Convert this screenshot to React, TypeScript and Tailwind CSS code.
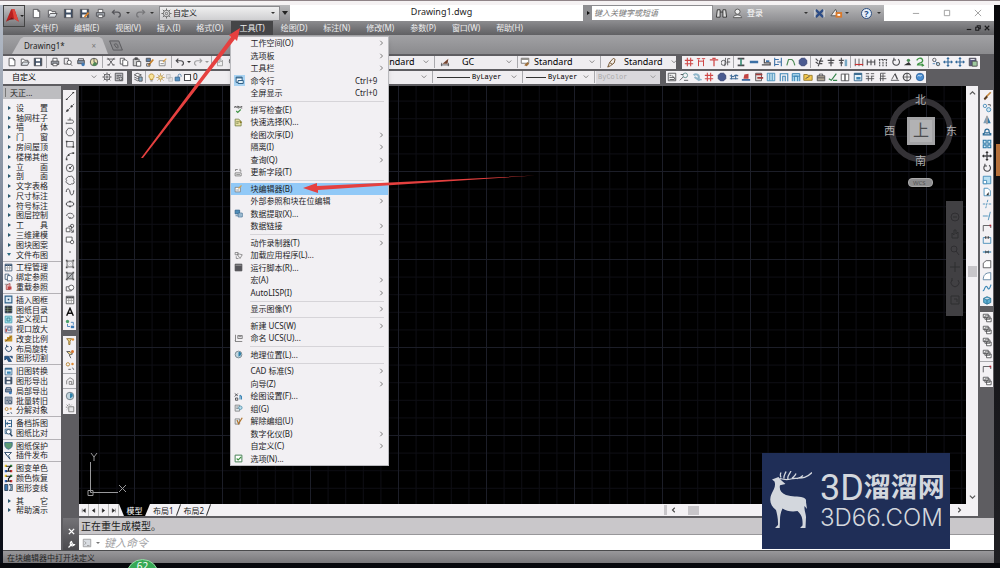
import React from "react";

const glyphs: Record<string, React.ReactNode> = {
  page: <path d="M2.5 1.5h5l2 2v7h-7zM7.5 1.5v2h2" fill="#fff" />,
  open: <><path d="M1.5 10V2.5h3l1 1.5h4v2" fill="#fff" /><path d="M1.5 10l2-4h7.5l-2 4z" fill="#dfe3e8" /></>,
  save: <><path d="M1.5 1.5h9v9h-9z" fill="#3d4d63" /><path d="M3.5 2h5v3h-5zM3.5 7h5v3h-5z" fill="#fff" stroke="none" /></>,
  saveas: <><path d="M1.5 1.5h9v9h-9z" fill="#3d4d63" /><path d="M3.5 2h5v3h-5zM3.5 7h5v3h-5z" fill="#fff" stroke="none" /><path d="M6 10l4.500-5" stroke="#d9822b" strokeWidth="2" /></>,
  print: <><path d="M3.5 5V1.500h5V5" fill="#fff" /><path d="M1.500 5h9v4h-9z" fill="#9aa0a8" /><path d="M3.500 7.500h5v3h-5z" fill="#fff" /></>,
  preview: <><path d="M1.500 1.500h5v7h-5z" /><circle cx="7.500" cy="6.500" r="2.500" fill="#fff" /><path d="M9 8.500l2 2" /></>,
  publish: <><path d="M2 4h8v4H2z" fill="#7d8ea3" /><path d="M3 4V2h6v2" /><circle cx="8.500" cy="9" r="2" fill="#3f79b5" stroke="none" /></>,
  globe: <><circle cx="6" cy="6" r="4.500" fill="#c3d6df" stroke="#66757d" /><path d="M6 3c3-1 4 1 3 4l-3 2z" fill="#2c7fa8" stroke="none" /></>,
  pie: <><circle cx="6" cy="6" r="4.500" fill="#e9e2b0" /><path d="M6 6V1.500M6 6l4 2" /><path d="M6 6l4 2a4.500 4.500 0 01-6 2z" fill="#4f8a55" stroke="none" /></>,
  cut: <path d="M2 1l7 9M10 1L3 10M1.500 9.500h3M7.500 9.500h3M1 2.500h10" />,
  copy: <><path d="M1.500 1.500h5v7h-5z" fill="#fff" /><path d="M4.500 3.500h4l2 2v5h-6z" fill="#fff" /></>,
  paste: <><path d="M1.500 2.500h7v8h-7z" fill="#cfcfcf" /><path d="M5.500 5.500h5v5.500h-5z" fill="#fff" /><path d="M3.500 1h3v2h-3z" fill="#555" /></>,
  tstyle: <><path d="M1.500 1.500h9v6h-9z" fill="#fff" stroke="#6d6a66" /><path d="M1.500 2.500h9" strokeWidth="2" stroke="#8d8a86" /><path d="M5 10l4-4 2 2-3 3z" fill="#a0703a" stroke="none" /></>,
  pastec: <><path d="M1.500 1.500h8v9h-8z" fill="#5c5a86" /><path d="M5 5h6v6H5z" fill="#9fcaa0" /><path d="M3 3h5" stroke="#fff" /></>,
  match: <><path d="M1.500 1.500h5v4h-5z" fill="#5b7ea5" /><path d="M4 10l6-7" stroke="#c98229" strokeWidth="2" /><path d="M2 8h4v3H2z" /></>,
  blk: <><path d="M1.500 4.500h7v6h-7z" fill="#fff" stroke="#777" /><path d="M6 6l4-4" stroke="#d9a24b" strokeWidth="1.500" /><path d="M3 8h4" stroke="#777" /></>,
  undo: <path d="M4 2L1.500 4.500 4 7M1.500 4.500H7c4 0 4 5 1 5.500" strokeWidth="1.400" />,
  redo: <path d="M8 2l2.500 2.500L8 7M10.500 4.500H5C1 4.500 1 9.500 4 10" strokeWidth="1.400" stroke="#a2a2a4" />,
  redoTitle: <path d="M8 2l2.500 2.500L8 7M10.500 4.500H5C1 4.500 1 9.500 4 10" strokeWidth="1.400" stroke="#77777a" />,
  pan: <path d="M3 10.500V5l2 2V2l2 0v4l2-2v6.500z" fill="#eee" stroke="#999" />,
  zoom: <><circle cx="5" cy="5" r="3.500" /><path d="M7.500 7.500l3 3" strokeWidth="1.500" /></>,
  compare: <><path d="M1.500 1.500h8v6h-8z" fill="#cfe0ee" stroke="#2d5f87" /><circle cx="6" cy="5" r="3" fill="#fff" stroke="#23415f" /><path d="M8 7.500l3 3.500" stroke="#23415f" strokeWidth="2" /></>,
  gear: <><circle cx="6" cy="6" r="3.500" /><circle cx="6" cy="6" r="1.300" /><path d="M6 .5v2M6 9.500v2M.5 6h2M9.500 6h2M2 2l1.500 1.500M8.500 8.500L10 10M10 2L8.500 3.500M2 10l1.500-1.500" /></>,
  burst: <><path d="M4.500 4.500h6v6h-6z" fill="#e6e6e8" stroke="#777" /><path d="M1 5h2M2 2l2 2M5 1v2M8 2l-1 1M2 8l1-1" stroke="#777" /></>,
  ws: <><path d="M1.500 1.500h9v9h-9z" fill="#c9c9cd" /><path d="M3 4h6M3 6h3M3 8h2" /><circle cx="8" cy="8" r="2" /></>,
  layers: <><path d="M1.500 3.500L5 1.500l5 2-4 2z" fill="#fff" /><path d="M1.500 6l4 2 4.500-2M1.500 8.500l4 2 4.500-2" /><path d="M7 6h4v5H7z" fill="#8bb2cc" /></>,
  bulb: <><path d="M6 1.200a3.300 3.300 0 00-2 6v1.500h4V7.200a3.300 3.300 0 00-2-6z" fill="#f8e39a" stroke="#b88a26" /><path d="M4.500 10.500h3" /></>,
  sun: <><circle cx="6" cy="6" r="2.500" fill="#f8e39a" stroke="#a9812f" /><path d="M6 .5v2M6 9.500v2M.5 6h2M9.500 6h2M2 2l1.500 1.500M8.500 8.500L10 10M10 2L8.500 3.500M2 10l1.500-1.500" stroke="#a9812f" /></>,
  faint: <path d="M2 2h5v5H2zM5 6h5v5H5z" stroke="#bbb" fill="#e2e2e4" />,
  lock: <><path d="M5.500 6V3.500a2 2 0 014 0V5" stroke="#3b6f9e" /><path d="M1.500 5.500h6v5h-6z" fill="#5a94c4" stroke="#2f5f8a" /></>,
  sq: <path d="M2 2h8v8H2z" fill="#fff" strokeWidth="1.400" />,
  line: <><path d="M2 10L10 2" /><path d="M1 10h2M9 2h2" stroke="#333" strokeWidth="1.500" /></>,
  xline: <><path d="M1 11L11 1" strokeDasharray="3 1" /><circle cx="3" cy="9" r="1" fill="#333" /><circle cx="8" cy="4" r="1" fill="#333" /></>,
  pline: <path d="M2 10h6c3 0 3-4 0-4H3M6 3v3M1.500 9v2" />,
  poly: <path d="M4 1.500h4L10.500 5v2.500L8 10.500H4L1.500 7.500V5z" />,
  rect: <><path d="M2 3h8v6.500H2z" /><path d="M1 2h2v2H1zM9 8.500h2v2H9z" fill="#444" stroke="none" /></>,
  arc: <><path d="M1.500 10C2 5 5 2.500 10 2.500" /><path d="M1 9h2v2H1zM9 1.500h2v2H9zM3.500 4h2v2h-2z" fill="#444" stroke="none" /></>,
  circ: <><circle cx="6" cy="6" r="4.500" /><path d="M6 6l3-3" /><circle cx="6" cy="6" r=".8" fill="#333" /></>,
  cloud: <path d="M3 3a2 2 0 013-1 2 2 0 013.500 1.500A2 2 0 0110 7a2 2 0 01-2 3.500 2.500 2.500 0 01-4.500-.5A2 2 0 012 6.500 2 2 0 013 3z" />,
  spline: <path d="M1.500 6c0-5 4-5 4.500 0s4.500 5 4.500-2" strokeWidth="1.200" />,
  ell: <><ellipse cx="6" cy="6" rx="4.500" ry="2.800" /><path d="M5 3h2M5 9h2M1 6h1M10 6h1" strokeWidth="1.800" /></>,
  ellarc: <path d="M2 6C2 1 11 2 10.500 6.500 10 9 7 9 5 8.500M4 6.500L5 8.500l2-.5" />,
  insert: <><path d="M1.500 6h4.500v4.500H1.500zM4 4h4v4" fill="#fff" /><circle cx="8.500" cy="3.500" r="2" /><path d="M7 8l3 3M10 8v3H7" /></>,
  mkblk: <><path d="M1.500 2.500h7v6h-7z" fill="#fff" /><circle cx="8.500" cy="8.500" r="2" fill="#fff" /></>,
  dot: <circle cx="6" cy="6" r=".8" fill="#222" stroke="none" />,
  hatch: <><path d="M2.500 2.500h7v7h-7z" /><path d="M1 1h2v2H1zM9 1h2v2H9zM1 9h2v2H1zM9 9h2v2H9z" fill="#555" stroke="none" /><path d="M3 6l3-3M3 9l6-6M6 9l3-3" stroke="#ccc" /></>,
  grad: <><path d="M2.500 2.500h7v7h-7z" fill="#b5b8bb" /><path d="M1 1h2v2H1zM9 1h2v2H9zM1 9h2v2H1zM9 9h2v2H9z" fill="#555" stroke="none" /><path d="M3 9l6-6" /></>,
  region: <><path d="M1.500 4.500h6v5h-6z" /><circle cx="7.500" cy="5.500" r="3" fill="#fff" /></>,
  table: <><path d="M1.500 1.500h9v9h-9z" fill="#fff" /><path d="M1.500 3h9" strokeWidth="2" /><path d="M1.500 6.500h9M4.500 3v7.500M7.500 3v7.500" stroke="#999" /></>,
  textA: <path d="M2 10.500L6 1.500l4 9M3.500 7.500h5" stroke="#111" strokeWidth="1.700" />,
  nodes: <><circle cx="3" cy="3" r="2" fill="#4aa06a" stroke="none" /><path d="M7 4h3v3M3 6v3h3" stroke="#3b79b5" /><path d="M7 8h4v3H7z" fill="#3b79b5" stroke="none" /></>,
  lampA: <><path d="M2 2h6l-2 3v4H4.500V5z" fill="#f5d98a" stroke="#8a6b2a" /><circle cx="9.500" cy="3" r="1.500" fill="#e08c35" stroke="none" /></>,
  lampB: <><path d="M2 3h4l3 3-3 1zM5 7l2 4" fill="#f5d98a" /><circle cx="9" cy="3" r="1.800" fill="#d9742c" stroke="none" /></>,
  lampC: <><circle cx="3.500" cy="4" r="2" stroke="#b27b22" /><circle cx="9" cy="3.500" r="1.500" fill="#e08c35" stroke="none" /><path d="M4 10h3M9 8l1.500 2.500" /></>,
  funnel: <path d="M1 2h9L6 6l2 5-4-5zM1 2l3 4" fill="#fff" strokeWidth="1.200" />,
  house: <path d="M2 10V5.500L6 2l4 2.500V10H5V6.500h3V10" stroke="#777" />,
  brush: <><path d="M10.500 1.500L5 7" stroke="#c98a3f" strokeWidth="2" /><path d="M5.500 5.500L2 9l1.500 2L7 7.500z" fill="#5b3d21" stroke="none" /></>,
  leader: <path d="M3 11l2-5 4-4.500 2 1-1 4-4 3zM5 6l3 2" fill="#f1ece6" stroke="#70502c" />,
  pair: <><circle cx="3.500" cy="3.500" r="2" stroke="#3b85b5" /><circle cx="8" cy="8" r="2.500" fill="#cfe6f2" stroke="#3b85b5" /><path d="M7 2h3v2" /></>,
  snap: <><path d="M1 2l4 3M5 2L1 6M2 8h3v3H2z" strokeWidth="1.200" /><path d="M8 4v6M8 4l2 2v4" stroke="#3b85b5" strokeWidth="1.400" /></>,
  mirror: <><path d="M5 2v8H1.500z" fill="#7e9db5" stroke="none" /><path d="M7 2v8h3.500z" fill="#2f79a8" stroke="none" /><path d="M6 1v10" /></>,
  offset: <path d="M1.500 9.500h9V8c-2 0-2-1-2-3a2.500 2.500 0 00-5 0c0 2 0 3-2 3zM4 7h4" stroke="#2b6a96" strokeWidth="1.400" />,
  array: <path d="M1.500 1.500h3.500v3.500H1.500zM7 1.500h3.500v3.500H7zM1.500 7h3.500v3.500H1.500zM7 7h3.500v3.500H7z" stroke="#2b79a8" strokeWidth="1.300" fill="#d6ecf7" />,
  extract: <><path d="M1.500 1.500h6v5h-6z" fill="#4f8db8" stroke="#2d5f87" /><path d="M5.500 5.500h5.500v5H5.500z" fill="#d6ecf7" stroke="#2d5f87" /><path d="M2 9h3M6 8h4" stroke="#2d5f87" /></>,
  move: <><path d="M6 1v10M1 6h10" strokeWidth="1.600" /><path d="M6 0l2 2.500H4zM6 12l2-2.500H4zM0 6l2.500-2v4zM12 6L9.500 4v4z" fill="#333" stroke="none" /></>,
  moveb: <><path d="M6 1v10M1 6h10" stroke="#33699a" strokeWidth="1.400" /><path d="M6 0l2 2.500H4zM6 12l2-2.500H4zM0 6l2.500-2v4zM12 6L9.500 4v4z" fill="#33699a" stroke="none" /></>,
  rotate: <path d="M3.500 3a4 4 0 105-.3M3.500 1v2.500H6" strokeWidth="1.300" />,
  scale: <><path d="M1.500 1.500h9v9h-9z" fill="#b8dff2" stroke="#3b85b5" /><path d="M1.500 6.500h4v4h-4z" fill="#fff" stroke="#3b85b5" /></>,
  stretch: <><path d="M2.500 1.500H7l3 3v6H2.500z" fill="#fff" stroke="#3b85b5" /><path d="M5 10l3-4v4z" fill="#333" stroke="none" /></>,
  trim: <path d="M1 6h3M8 6h3M7 1L4.500 11" stroke="#3b85b5" strokeDasharray="3 1" />,
  extend: <path d="M1 6h6M10 1L7.500 11M8 6h1" stroke="#3b85b5" />,
  brk: <><path d="M1.500 10V3h9v3" /><path d="M9 2h2v2H9z" fill="#b23" stroke="none" /></>,
  brk2: <><path d="M1.500 10V3h3M7.500 3h3v7H1.500" stroke="#3b85b5" /><path d="M4 2h1v2H4zM7 2h1v2H7z" fill="#333" /></>,
  join: <><path d="M1 6h10" stroke="#3b85b5" strokeWidth="1.500" /><path d="M4 4l2 2-2 2zM8 4L6 6l2 2z" fill="#333" stroke="none" /></>,
  chamfer: <path d="M1.500 10.500V5L5 2h5.500v8.500z" fill="#fff" />,
  fillet: <path d="M1.500 10.500C1.500 5 4 2 10.500 2v8.500z" fill="#fff" stroke="#53799a" />,
  blend: <path d="M1 9c2 1 2-5 4-5s2 4 3.500 3S10 3 11 2" stroke="#3b85b5" strokeWidth="1.400" />,
  cube: <path d="M2 4l4-2 4.500 2v5L6 11 2 9zM2 4l4 2 4.500-2M6 6v5" fill="#5fb0d2" stroke="#2a7298" />,
  stack: <path d="M1.500 1.500h6v4h-6zM3.500 3.500h6v4h-6zM5.500 6h5.500v4.500H5.500z" fill="#fff" />,
  group: <><path d="M1.500 1.500h6v8h-6z" fill="#dfe6ea" stroke="#777" /><path d="M3 4h3M3 6h3" stroke="#777" /><circle cx="8.500" cy="5" r="2.300" fill="#b9dcea" stroke="#4a8ba8" /></>,
  ungroup: <><path d="M1.500 2.500h6v7h-6z" fill="#dfe6ea" stroke="#777" /><path d="M4 4l2 5 5-8" stroke="#b0732c" strokeWidth="1.600" /></>,
  hash: <path d="M4 1v10M8 1v10M1 4h10M1 8h10" stroke="#cf4747" strokeWidth="1.300" />,
  cols: <path d="M3 3v8M9 3v8M1 2h4M7 2h4M3 5h6" stroke="#cf4747" strokeWidth="1.200" />,
  tee: <path d="M1 3.500h10M6 3.500V11M4 1.500h4" stroke="#cf4747" strokeWidth="1.500" />,
  dim: <path d="M3 4a2 2 0 100 6 2 2 0 000-6M5.500 1l-1 10M8 10V2h3M7 6h4" />,
  ibeam: <><path d="M2 2h8M2 10h8" strokeWidth="2" /><path d="M6 2v8" stroke="#3f8f7a" strokeWidth="2" /></>,
  wall: <path d="M1 6h10" stroke="#3b6fa5" strokeWidth="3" />,
  stairs: <><path d="M1 9.500h10V7h-7V2" strokeWidth="1.400" /><path d="M6 4h4v2H6z" fill="#3b6fa5" stroke="none" /></>,
  split: <path d="M2 1v10M2 3h5M2 9h5M10 1v10M5 6h5" stroke="#3b6fa5" strokeWidth="1.300" />,
  rail: <path d="M2 1v10M10 1v10M4.500 2v8M7.500 2v8M2 6h8" stroke="#4597b5" strokeWidth="1.200" />,
  roof: <path d="M1 10L3 3h4c3 2 3 4 3.500 7" stroke="#4c8a55" strokeWidth="1.400" />,
  hex: <path d="M4 1.500h4L10.500 4v4L8 10.500H4L1.500 8V4z" fill="#4a5a90" stroke="#333f70" />,
  tool1: <path d="M2 2l3 3M2 6l3 2M9 1L5 11M6 5h5M7 8h3" strokeWidth="1.400" />,
  tool2: <path d="M6 1v10M2 4h8M3 7h6" strokeWidth="1.400" />,
  tool3: <><path d="M4 1v10M1 4h6M2 7h4" strokeWidth="1.300" /><path d="M8 3h3v8H8z" fill="#78a8c4" stroke="none" /></>,
  dims: <><path d="M1.500 2v9M6 2v9M10.500 2v9" /><path d="M1 9h10" stroke="#c33" strokeWidth="1.400" /></>,
  dimh: <path d="M1.500 3v7M6 3v7M10.500 3v7M1 6h10" strokeWidth="1.300" />,
  dimd: <path d="M2 3v8M6 3v8M10 3v8M1 3h10" strokeDasharray="2 1" strokeWidth="1.300" />,
  person: <><path d="M1 10h9L7 6z" fill="#333" stroke="none" /><circle cx="6.500" cy="4" r="2" fill="#4c8a55" stroke="none" /></>,
  swirl: <path d="M2 4c3-5 8-2 7 1S3 7 3 9.500h5M8 8l2 2-2 1" stroke="#3f9344" strokeWidth="1.600" />,
  linkk: <><circle cx="4" cy="3.500" r="2" /><path d="M5 5l3 3M2 8h3" stroke="#3b79b5" /><circle cx="8.500" cy="8.500" r="2" fill="#b7d6e8" /></>,
  app: <path d="M1.500 2h4v3h-4zM4 4l4 6 3-5-4-1zM3 7v3h3" stroke="#777" />,
  list: <><path d="M1.500 1.500h9v9h-9z" fill="#f1f1f1" /><path d="M3 4h2M3 6.500h6M3 9h6M6 4l4 5" /></>,
  search2: <><circle cx="7.500" cy="4" r="2.800" stroke="#588" /><path d="M1 10l4-4M2 3h3M6 10h5" /></>,
  fog: <path d="M2 4c3-3 7 0 6 3s3 2 3 3M3 6l6 4" stroke="#8fb5c9" strokeWidth="2.500" />,
  wave: <path d="M1 5c2-2 3 2 5 0s3-2 5 0M1 8h10M3 3v6M8 4v5" stroke="#426d99" strokeWidth="1.300" />,
  redhat: <><path d="M1 9.500h10" stroke="#34609a" strokeWidth="2" /><path d="M3 8l1-5 5-1v6z" fill="#c24343" stroke="none" /></>,
  redpg: <><path d="M2 1.500h7v9H2z" fill="#e6dede" /><path d="M2 3h8M4 7h7" stroke="#a33a3a" strokeWidth="2" /></>,
  reload: <><path d="M3 10V4l5-2v8z" fill="#e3b5b5" stroke="#a34a4a" /><path d="M5 6h5v4H5z" fill="#c24343" stroke="none" /><path d="M1 3h4" stroke="#777" /></>,
  bluepg: <path d="M1.500 1.500h9v9h-9zM4.500 2v8M7.500 2v8" fill="#c4e2ef" stroke="#3b85b5" />,
  gate: <path d="M1.500 11V2h9v9M4.500 11V5h3v6" stroke="#3b85b5" strokeWidth="1.300" />,
  gateb: <path d="M1.500 11V2h9v9M4 11V5h4v6M1.500 5h9" fill="#b8dff2" stroke="#3b85b5" strokeWidth="1.200" />,
  folder: <><path d="M1 3h4l1 1h5v6H1z" fill="#f3c74f" stroke="#8f7427" /><path d="M3 8l5-3" /></>,
  briefcase: <><path d="M1.500 4.500h9v6h-9z" fill="#b5aa98" /><path d="M4 4.500V2.500h4v2M1.500 7h9" /></>,
  field: <><path d="M1.500 6.500h8v4h-8z" fill="#fff" stroke="#666" /><path d="M3 8.500h5M2 4V2h3M8 1v3h2" stroke="#666" /></>,
  check: <path d="M1 8l3 2 6-8M6 10h5" stroke="#34834a" strokeWidth="1.400" />,
  book: <path d="M1.500 2.500H6v8H1.500zM6 2.500h4.500v8H6z" fill="#fff" />,
  win: <><path d="M1.500 1.500h9v9h-9z" fill="#e4f1f8" stroke="#2d5f87" /><path d="M1.500 2.500h9" stroke="#2d5f87" strokeWidth="2" /><path d="M4 6h5v3H4z" fill="#3b85b5" stroke="none" /></>,
  cmd: <><path d="M1.500 1.500h8v7h-8z" fill="#fff" stroke="#2d5f87" strokeWidth="1.300" /><path d="M1.500 2.500h8" stroke="#2d5f87" strokeWidth="1.500" /><path d="M4 6h7v4H4z" fill="#e4f1f8" stroke="#2d5f87" strokeWidth="1.300" /></>,
  key: <path d="M1 2h4M1 5h4M7 2h4M7 5h4M1 8h10M4 5v6M8 5v6" />,
  flag: <path d="M3 11V1.500h6M3 5h6M6 2v9M2 8h8" />,
  level: <><path d="M1 10h10M6 2L2 9" /><path d="M6 2l3 7" strokeWidth="1.600" /></>,
  dstyle: <><path d="M1 9.500h10M2 7v4M10 7v4" /><path d="M3 8l7-6-1 6z" fill="#70402c" stroke="none" /></>,
  target: <><circle cx="6" cy="6" r="4.500" strokeWidth="1.300" /><path d="M6 1v10M1 6h10" /></>,
  ball: <><circle cx="6" cy="6" r="4.500" fill="#4b8ed0" stroke="#2e619c" /><path d="M3 5c2-2 3 1 5-1" stroke="#fff" /></>,
  dgrid: <><path d="M1.500 1.500h9v9h-9z" fill="#333" /><path d="M1.500 4.500h9M1.500 7.500h9M5 1.500v9" stroke="#9b9" strokeWidth=".6" /></>,
  frame: <><path d="M1.500 1.500h9v9h-9z" fill="#d7e7f2" stroke="#2d5f87" strokeWidth="1.500" /><path d="M5 5h2v2H5z" fill="#1d3f67" stroke="none" /></>,
  aqua: <><path d="M1.500 1.500h9v9h-9z" fill="#9fdbe6" stroke="#3f9db0" /><path d="M4 4h4v4H4z" stroke="#297989" /></>,
  vzoom: <><path d="M1.500 1.500h9v9h-9z" fill="#e9dfe4" stroke="#5a6f93" /><path d="M5 3h4v4H5z" stroke="#2d5f87" /><path d="M2 5h2v4H2z" fill="#b34a4a" stroke="none" /></>,
  ratio: <><path d="M1 10V7h3V4h3V2h4v8z" fill="#c7962a" stroke="none" /><path d="M2 10l8-7" stroke="#65451c" /></>,
  knife: <path d="M1 3h5l4 7H6L4 6 1 8zM7 3h4v3" fill="#25598e" stroke="#1c3f67" />,
  split2: <path d="M2 1v10M10 1v10M3 6h6M5 4L3 6l2 2M6 2h3M6 10h3" stroke="#2d5f87" strokeWidth="1.300" />,
  wrench: <path d="M2 10l5-5M6 2a3 3 0 104 4L8.500 6 7 5z" strokeWidth="1.600" />,
  scr: <><path d="M1.500 1.500h9v9h-9z" fill="#55555a" /><path d="M2 3h8" stroke="#aaa" /></>,
  quick: <><path d="M1.500 1.500h5l3 3v6h-8z" fill="#e9e1a8" stroke="#6b7a3c" /><path d="M3 5h4M3 7h3" stroke="#6b7a3c" /><path d="M7 3l4 3-3 1z" fill="#8a7a26" stroke="none" /></>,
  colors: <><path d="M1 1h3v3H1z" fill="#e7c12c" stroke="none" /><path d="M8 1h3v3H8z" fill="#3a9a4c" stroke="none" /><path d="M1 8h3v3H1z" fill="#3167b8" stroke="none" /><path d="M8 8h3v3H8z" fill="#c33" stroke="none" /><path d="M3 3h6L6 6v3M3 9.500h6" strokeWidth="1.500" stroke="#222" /></>,
  lines: <><path d="M1 2h4v8H1z" fill="#3b79b5" stroke="#234" /><path d="M7 2c3 2 3 6 0 8h4V2z" fill="#9cc4dd" stroke="#234" /></>,
  abc: <><path d="M1 4V2h2v2M5 1v3h2V2H5M11 2H9v2h2" stroke="#444" /><path d="M3 8l2 2 4-4" stroke="#3f9344" strokeWidth="1.500" /></>,
  ucs: <path d="M2 1v9h9M2 10l-1-1M5 2h6v4H5zM6 3.500h4" stroke="#666" />,
  opt: <><path d="M1.500 1.500h9v9h-9z" fill="#fff" stroke="#447f52" strokeWidth="1.300" /><path d="M3.500 6l2 2 4-4" stroke="#3f9344" strokeWidth="1.500" /></>,
  shield: <path d="M1 2h10v3c0 4-3 5-5 6C3 10 1 8 1 5z" fill="#5e9b74" stroke="#2d5f87" />,
};

function Ico({ n, s = "size-[10px]", c = "#4a4a4e" }: { n: string; s?: string; c?: string }) {
  return (
    <svg viewBox="0 0 12 12" className={`${s} shrink-0`} fill="none" stroke={c} strokeWidth="1" aria-hidden="true">
      {glyphs[n]}
    </svg>
  );
}

function Tool({ n, w = "w-[12px]", c }: { n: string; w?: string; c?: string }) {
  return (
    <button type="button" aria-label={n} className={`${w} flex h-3 shrink-0 items-center justify-center`}>
      <Ico n={n} c={c} />
    </button>
  );
}

const Bar = () => <span className="mx-px h-3 w-px shrink-0 bg-[#a9a9ad]" />;
const HBar = () => <span className="my-px h-px w-full shrink-0 bg-[#a9a9ad]" />;
const Caret = ({ c = "border-t-[#333]" }: { c?: string }) => (
  <span className={`block h-0 w-0 shrink-0 border-x-2 border-t-2 border-x-transparent ${c}`} />
);

function Drop({ label, value, className, font = "", children }: { label: string; value: string; className: string; font?: string; children?: React.ReactNode }) {
  return (
    <label className={`relative flex h-[13px] shrink-0 items-center ${className}`}>
      {children}
      <select aria-label={label} className={`min-w-0 flex-1 appearance-none bg-transparent leading-3 outline-none ${font}`}>
        <option>{value}</option>
      </select>
      <svg viewBox="0 0 8 8" className="mr-1 size-[6px] shrink-0" fill="none" stroke="#666" aria-hidden="true">
        <path d="M1 2l3 3 3-3" />
      </svg>
    </label>
  );
}

const menus = ["文件(F)", "编辑(E)", "视图(V)", "插入(I)", "格式(O)", "工具(T)", "绘图(D)", "标注(N)", "修改(M)", "参数(P)", "窗口(W)", "帮助(H)"];

type Item = { t: string; icon?: string; sub?: boolean; key?: string; on?: boolean };
const toolMenu: Item[][] = [
  [{ t: "工作空间(O)", sub: true }, { t: "选项板", sub: true }, { t: "工具栏", sub: true }, { t: "命令行", icon: "cmd", key: "Ctrl+9" }, { t: "全屏显示", key: "Ctrl+0" }],
  [{ t: "拼写检查(E)", icon: "abc" }, { t: "快速选择(K)...", icon: "quick" }, { t: "绘图次序(D)", sub: true }, { t: "隔离(I)", sub: true }, { t: "查询(Q)", sub: true }, { t: "更新字段(T)", icon: "field" }],
  [{ t: "块编辑器(B)", icon: "blk", on: true }, { t: "外部参照和块在位编辑", sub: true }, { t: "数据提取(X)...", icon: "extract" }, { t: "数据链接", sub: true }],
  [{ t: "动作录制器(T)", sub: true }, { t: "加载应用程序(L)...", icon: "app" }, { t: "运行脚本(R)...", icon: "scr" }, { t: "宏(A)", sub: true }, { t: "AutoLISP(I)", sub: true }],
  [{ t: "显示图像(Y)", sub: true }],
  [{ t: "新建 UCS(W)", sub: true }, { t: "命名 UCS(U)...", icon: "ucs" }],
  [{ t: "地理位置(L)...", icon: "globe" }],
  [{ t: "CAD 标准(S)", sub: true }, { t: "向导(Z)", sub: true }, { t: "绘图设置(F)...", icon: "snap" }, { t: "组(G)", icon: "group" }, { t: "解除编组(U)", icon: "ungroup" }, { t: "数字化仪(B)", sub: true }, { t: "自定义(C)", sub: true }, { t: "选项(N)...", icon: "opt" }],
];

function ToolMenu() {
  return (
    <ul role="menu" className="absolute -left-px top-[15px] z-30 flex h-[430px] w-[159px] flex-col border border-[#b9b9bd] bg-[#f2f0f3] text-[#1d1d1f] shadow-md">
      {toolMenu.map((g, gi) => (
        <React.Fragment key={gi}>
          {gi > 0 && <li role="separator" className="flex h-1 shrink-0 items-center pl-[19px] pr-1"><span className="h-px w-full bg-[#d6d4d8]" /></li>}
          {g.map((m) => (
            <li key={m.t} role="none" className="min-h-0 flex-1">
              <button type="button" role="menuitem" className={`flex h-full w-full items-center pr-1 text-left leading-3 ${m.on ? "bg-[#91c9f7]" : ""}`}>
                <span className="flex w-[19px] items-center pl-[3px]">
                  {m.icon && <span className={m.icon === "cmd" ? "bg-[#a9d3f2] p-px" : ""}><Ico n={m.icon} s="size-[9px]" /></span>}
                </span>
                <span className="flex-1 whitespace-nowrap">{m.t}</span>
                {m.key && <span className="pr-[7px]">{m.key}</span>}
                {m.sub && (
                  <svg viewBox="0 0 8 8" className="size-[6px]" fill="none" stroke="#555" aria-hidden="true"><path d="M3 1l3 3-3 3" /></svg>
                )}
              </button>
            </li>
          ))}
        </React.Fragment>
      ))}
    </ul>
  );
}

const palette: [string, string][][] = [
  ["设置", "轴网柱子", "墙体", "门窗", "房间屋顶", "楼梯其他", "立面", "剖面", "文字表格", "尺寸标注", "符号标注", "图层控制", "工具", "三维建模", "图块图案"].map((t) => ["", t] as [string, string]).concat([["v", "文件布图"]]),
  [["table", "工程管理"], ["copy", "绑定参照"], ["reload", "重载参照"]],
  [["frame", "插入图框"], ["dgrid", "图纸目录"], ["aqua", "定义视口"], ["vzoom", "视口放大"], ["ratio", "改变比例"], ["rotate", "布局旋转"], ["knife", "图形切割"]],
  [["win", "旧图转换"], ["save", "图形导出"], ["publish", "局部导出"], ["ws", "批量转旧"], ["lampC", "分解对象"]],
  [["split2", "备档拆图"], ["compare", "图纸比对"]],
  [["shield", "图纸保护"], ["funnel", "插件发布"]],
  [["colors", "图变单色"], ["colors", "颜色恢复"], ["lines", "图形变线"]],
  [["", "其它"], ["", "帮助演示"]],
];

function Palette() {
  return (
    <aside className="flex w-[58px] shrink-0 flex-col bg-[#f3f1f4]">
      <h2 className="flex h-[13px] items-center gap-1 bg-[#bdbdc0] pl-[2px] leading-3 text-[#222]">
        <span className="h-[9px] w-px bg-[#777]" />天正...
      </h2>
      <ul className="mb-[35px] mt-1 flex min-h-0 flex-1 flex-col text-[#1d1d1f]">
        {palette.map((g, gi) => (
          <React.Fragment key={gi}>
            {gi > 0 && <li role="separator" className="flex h-[3px] shrink-0 items-center"><span className={`h-px w-full ${gi === 7 ? "" : "bg-[#b4b2b6]"}`} /></li>}
            {g.map(([ic, t]) => (
              <li key={t} className="min-h-0 flex-1">
                <button type="button" className="flex h-full w-full items-center leading-[10px]">
                  <span className="flex w-[13px] shrink-0 items-center pl-px">
                    {ic === "" && <span className="ml-1 border-y-2 border-l-[3px] border-y-transparent border-l-[#2d5a70]" />}
                    {ic === "v" && <span className="ml-[3px] border-x-2 border-t-[3px] border-x-transparent border-t-[#2d6a80]" />}
                    {ic.length > 1 && <Ico n={ic} s="size-[9px]" c="#2d4a6a" />}
                  </span>
                  <span className="flex w-8 justify-between whitespace-nowrap">
                    {t.length === 2 ? <><span>{t[0]}</span><span>{t[1]}</span></> : t}
                  </span>
                </button>
              </li>
            ))}
          </React.Fragment>
        ))}
      </ul>
    </aside>
  );
}

function Strip({ items, className = "" }: { items: string[]; className?: string }) {
  return (
    <div role="toolbar" className={`flex flex-col items-center bg-[#f3f1f4] ${className}`}>
      {items.map((n, i) => (n === "|" ? <HBar key={i} /> : <Tool key={i} n={n} />))}
    </div>
  );
}

function Row({ items, c }: { items: string[]; c?: string }) {
  return <>{items.map((n, i) => (n === "|" ? <Bar key={i} /> : <Tool key={i} n={n} c={c} />))}</>;
}

function Compass() {
  return (
    <div className="absolute right-[10px] top-[7px] h-[74px] w-[72px] text-[11px] leading-3 text-[#b0b0b2]">
      <svg viewBox="0 0 72 74" className="absolute inset-0 size-full" aria-hidden="true">
        <circle cx="37" cy="37" r="29" fill="none" stroke="#343236" strokeWidth="6" />
        <path d="M23 24h28v28H23z" fill="#a3a3a5" />
        <path d="M26 27h22v22H26z" fill="#b2b2b4" />
      </svg>
      <span className="absolute left-[31px] top-[1px]">北</span>
      <span className="absolute left-[31px] top-[62px]">南</span>
      <span className="absolute left-0 top-[32px]">西</span>
      <span className="absolute left-[62px] top-[32px]">东</span>
      <span className="absolute left-[29px] top-[29px] text-[16px] leading-4 text-[#4c4c4e]">上</span>
    </div>
  );
}

function Canvas() {
  return (
    <div className="relative min-h-0 flex-1 overflow-hidden bg-black">
      <svg className="absolute inset-0 size-full" aria-hidden="true">
        <defs>
          <pattern id="grid" width="88" height="88" x="55" y="85" patternUnits="userSpaceOnUse">
            <path d="M18.100 0v88M35.700 0v88M53.300 0v88M70.900 0v88M0 18.100h88M0 35.700h88M0 53.300h88M0 70.900h88" stroke="#0d0d13" />
            <path d="M.5 0v88M0 .5h88" stroke="#1c1e28" />
          </pattern>
        </defs>
        <rect width="100%" height="100%" fill="url(#grid)" />
      </svg>
      <svg viewBox="0 0 46 46" className="absolute bottom-[6px] left-[6px] size-[46px]" fill="none" stroke="#99999b" aria-hidden="true">
        <path d="M5.500 38V10M8 40.500h25M3 38.500h5v5H3zM5.500 38.500v2h2M6 1l3 4 3-4M9 5v4M34 33l7 7M41 33l-7 7" />
      </svg>
      <Compass />
      <button type="button" className="absolute right-[33px] top-[92px] flex h-[9px] w-[25px] items-center rounded-sm border border-[#aaa] bg-[#8e8e90] pl-1 text-[6px] leading-[6px] text-[#555]">WCS</button>
      <div className="absolute right-[3px] top-[115px] flex h-[115px] w-[17px] flex-col items-center justify-around bg-[#414043] py-2">
        {["target", "hex", "zoom", "move", "rotate", "rect"].map((n, i) => (
          <svg key={n} viewBox="0 0 12 12" className="size-[12px]" fill="none" stroke="#2f2e31" aria-hidden="true">
            <path d={["M6 2a4 4 0 100 8 4 4 0 000-8M4 6h4", "M3 10V5l2 2V2h2v4l2-2v6z", "M5 2a3 3 0 100 6 3 3 0 000-6M7 7l3 4", "M6 1v10M1 6h10", "M3 3a4 4 0 106 0M3 1v3", "M2 2h8v8H2zM5 5h3v3"][i]} />
          </svg>
        ))}
      </div>
    </div>
  );
}

function Deer() {
  return (
    <svg viewBox="0 0 44 58" className="h-[58px] w-[44px] shrink-0" aria-hidden="true">
      <path d="M4 8.500L10.500 6l3 3.500L17.500 13l-5.500 1.200c-1 4.300 1 7.800 6 9.800 6 2 12 1 17 2.500 2 .7 3.500 1.500 3 4.500l1 7-2.500-3c-.5 4 1.500 8 1.500 11l-.5 11h-5.500l2.500-2.500c.5-7-1-11-5-14.500-5 1-11 .3-15-2.500-2 4-2.500 8-2.500 11l-.3 8.500H7l3-3c.3-6-1-11-2-15C2.500 35 .8 29 3.500 23 6 18 8 15 6.500 10.500z" fill="#d3d7dd" />
      <path d="M12 7.500c5 1.500 10 1 13 0 6-1.500 11 2 19-6M13 6.500c-1-2-1-3 0-5M16 7.500c-.5-3 1-4 2-7M20 8c-1-3 1-4 3-8M24 7.500c1-2 3-2 4-5M29 7.500c3 0 4-1 6-3" fill="none" stroke="#d3d7dd" strokeWidth="1.300" />
    </svg>
  );
}

export default function App() {
  return (
    <div
      lang="zh-CN"
      className="relative flex h-screen min-h-[560px] flex-col overflow-hidden bg-linear-to-b from-[#b9c0cb] from-0% via-[#7b8698] via-40% to-[#0b0f18] to-70% pl-[3px] font-['Noto_Sans','Noto_Sans_CJK_SC',sans-serif] text-[8px]"
    >
      <div className="-ml-[3px] h-[5px] shrink-0 border-t border-[#8f8488] bg-[#f5f2f3]" />
      <div className="flex min-h-0 flex-1 bg-[#0b0b0e]">
        <div className="flex min-w-0 flex-1 flex-col bg-[#5e5d61]">
          <header className="relative z-20 flex bg-linear-to-b from-[#c4c4c6] to-[#5f5f62]">
            <button type="button" aria-label="Application" className="flex h-[22px] w-[22px] shrink-0 items-center justify-center border border-[#444] bg-linear-to-b from-[#c6c6c8] to-[#77777a]">
              <svg viewBox="0 0 20 18" className="h-[18px] w-[19px]" aria-hidden="true">
                <path d="M1 15L6.500 2H10l4.500 13-4-2.500L7 11z" fill="#b8201f" />
                <path d="M7.500 2H10l4.500 13-5-3.500z" fill="#e0463c" />
                <path d="M1 15l6-4.500 3 2L5 13z" fill="#7c1114" />
                <path d="M16 8h4l-2 2z" fill="#222" />
              </svg>
            </button>
            <div className="flex min-w-0 flex-1 flex-col">
              <div className="flex h-4 bg-white">
                <div className="flex w-[265px] shrink-0 items-center bg-linear-to-b from-[#b9b9bb] to-[#8f8f92] pl-[3px]">
                  {["page", "open", "save", "saveas", "print", "undo"].map((n) => (
                    <button key={n} type="button" aria-label={n} className="flex w-4 items-center justify-center"><Ico n={n} s="size-[11px]" c="#55555a" /></button>
                  ))}
                  <span className="flex w-2 justify-center"><Caret /></span>
                  <button type="button" aria-label="redo" className="flex w-4 items-center justify-center"><Ico n="redoTitle" s="size-[11px]" /></button>
                  <span className="flex w-2 justify-center"><Caret /></span>
                  <label className="ml-[3px] flex h-[15px] flex-1 items-center gap-px border border-[#8a8a8d] bg-linear-to-b from-[#efeff0] to-[#cfcfd1] pl-px text-[#222]">
                    <Ico n="gear" s="size-[11px]" c="#666" />
                    <select aria-label="Workspace" className="min-w-0 flex-1 appearance-none bg-transparent leading-3 outline-none"><option>自定义</option></select>
                    <span className="mr-1"><Caret /></span>
                  </label>
                  <button type="button" aria-label="More" className="flex w-[10px] items-center justify-center"><span className="block h-0 w-0 border-x-[3px] border-t-4 border-x-transparent border-t-[#222]" /></button>
                </div>
                <h1 className="flex-1 pl-[10px] text-center text-[9px] leading-[13px] text-[#222]">Drawing1.dwg</h1>
                <div className="flex w-[130px] shrink-0 border border-[#8d8d90]">
                  <button type="button" aria-label="Expand" className="flex w-2 items-center justify-center bg-[#8f8f92]"><span className="border-y-2 border-l-[3px] border-y-transparent border-l-[#111]" /></button>
                  <input aria-label="Search" placeholder="键入关键字或短语" className="min-w-0 flex-1 bg-white pl-[2px] italic outline-none placeholder:text-[#777]" />
                </div>
                <div className="flex w-[171px] shrink-0 items-center bg-linear-to-b from-[#b9b9bb] to-[#8f8f92] pl-[2px] text-white">
                  <svg viewBox="0 0 14 12" className="h-3 w-[13px]" fill="#ddd" stroke="#333" aria-hidden="true"><path d="M1.500 10.500l1-8h3v8zM8.500 10.500v-8h3l1 8zM5.500 5h3" /></svg>
                  <svg viewBox="0 0 12 12" className="ml-1 size-[11px]" fill="#eee" stroke="#555" aria-hidden="true"><circle cx="6" cy="4" r="2.800" /><path d="M1.500 10.500c0-4 9-4 9 0z" /></svg>
                  <button type="button" className="ml-1 leading-3">登录</button>
                  <span className="ml-auto"><Caret /></span>
                  <svg viewBox="0 0 12 12" className="ml-[6px] size-[11px]" fill="none" aria-hidden="true"><path d="M2 2l8 8M10 2l-8 8" stroke="#2d4c86" strokeWidth="2.500" /><path d="M1 2v8M11 2v8" stroke="#e8edf5" /></svg>
                  <svg viewBox="0 0 14 12" className="ml-[5px] h-3 w-[13px]" aria-hidden="true"><path d="M1 9l5-7 3 7z" fill="#eee" stroke="#555" /><path d="M6 5h7v6H6z" fill="#d9792b" /><path d="M8 7h3v2H8z" fill="#fff" /></svg>
                  <span className="ml-[2px]"><Caret /></span>
                  <span className="ml-[12px] flex size-[11px] items-center justify-center rounded-full border border-[#2f4f7f] bg-[#e6effa] text-[9px] font-bold leading-[9px] text-[#234a86]">?</span>
                  <span className="ml-[5px] mr-[3px]"><Caret /></span>
                </div>
                <div className="flex w-[110px] shrink-0 items-center justify-around pl-4">
                  {["M1 5h7", "M1.500 1.500h6v6h-6z", "M1 1l7 7M8 1L1 8"].map((d, i) => (
                    <button key={i} type="button" aria-label={["Minimize", "Maximize", "Close"][i]}>
                      <svg viewBox="0 0 9 9" className="block size-[8px]" fill="none" stroke="#999" aria-hidden="true"><path d={d} /></svg>
                    </button>
                  ))}
                </div>
              </div>
              <nav className="flex h-[14px] items-center bg-linear-to-b from-[#8c8c8f] to-[#606063]">
                {menus.map((m) => (
                  <div key={m} className={`relative h-full ${m === "工具(T)" ? "bg-[#454547]" : ""}`}>
                    <button type="button" className="h-full whitespace-nowrap px-2 leading-[14px] text-[#ededee]">{m}</button>
                    {m === "工具(T)" && <ToolMenu />}
                  </div>
                ))}
                <div className="ml-auto mr-1 flex gap-[3px]">
                  {["M1 6h6", "M1 3h4v4H1zM3 3V1h4v4H5", "M1 1l6 6M7 1L1 7"].map((d, i) => (
                    <svg key={i} viewBox="0 0 8 8" className="size-[6px]" fill="none" stroke="#1c1c1e" strokeWidth="1.500" aria-hidden="true"><path d={d} /></svg>
                  ))}
                </div>
              </nav>
            </div>
          </header>

          <div className="flex h-[19px] shrink-0 items-end bg-linear-to-b from-[#a1a1a4] to-[#8b8b8e] pl-[9px]">
            <div className="flex h-[17px] w-[96px] items-center justify-between bg-[#c3c2c5] pl-[12px] pr-3 text-[#222] [clip-path:polygon(0_100%,9%_10%,12%_0,91%_0,94%_10%,100%_100%)]">
              <span>Drawing1*</span>
              <button type="button" aria-label="Close tab" className="leading-3 text-[#777]">×</button>
            </div>
            <svg viewBox="0 0 16 12" className="mb-[3px] h-[11px] w-4" fill="#8a8a8d" stroke="#58585b" aria-hidden="true"><path d="M1 1h10l4 10H5zM6 5c2-2 5 0 4 4M6 5l3 4" /></svg>
          </div>

          <div className="flex h-[15px] shrink-0 items-center gap-[6px] pt-px">
            <div role="toolbar" className="flex h-[13px] w-[673px] items-center bg-[#efedf0]">
              <div className="flex w-[373px] shrink-0 items-center gap-px overflow-hidden pl-[3px]">
                <Row items={["page", "open", "save", "|", "print", "preview", "publish", "pie", "|", "cut", "copy", "paste", "match", "blk", "|", "undo"]} />
                <Caret />
                <Row items={["redo"]} />
                <Caret c="border-t-[#999]" />
                <Row items={["|", "pan", "zoom"]} />
              </div>
              <Drop label="Text style" value="Standard" className="w-[57px]" font="text-[9px]" />
              <Bar />
              <Drop label="Dimension style" value="GC" className="w-[80px] gap-3 pl-1" font="text-[9px]"><Ico n="dstyle" /></Drop>
              <Bar />
              <Drop label="Table style" value="Standard" className="w-[80px] gap-1 pl-px" font="text-[9px]"><Ico n="tstyle" /></Drop>
              <Bar />
              <Drop label="Leader style" value="Standard" className="flex-1 gap-2 pl-[3px]" font="text-[9px]"><Ico n="leader" s="size-[11px]" /></Drop>
            </div>
            <div role="toolbar" className="flex h-[13px] w-[298px] items-center justify-between bg-[#f3f1f4] px-px">
              <Row items={["hash", "cols", "tee", "dim", "|", "ibeam", "wall", "stairs", "split", "roof", "hex", "|", "tool1", "tool2", "tool3", "|"]} />
              <Row items={["dims", "dimh", "dimd", "rotate", "person", "swirl", "|", "linkk", "moveb", "moveb", "pastec"]} />
            </div>
          </div>

          <div className="mb-[2px] flex h-[15px] shrink-0 items-center gap-[6px] pt-px">
            <div className="flex h-[13px] w-[657px] items-center">
              <div className="flex w-[124px] shrink-0 items-center bg-[#efedf0]">
                <Drop label="Workspace toolbar" value="自定义" className="w-[98px] pl-[9px]" />
                <Tool n="gear" />
                <Tool n="ws" />
              </div>
              <div className="ml-[5px] flex h-[13px] min-w-0 flex-1 items-center bg-[#efedf0]">
                <div className="flex w-[299px] items-center">
                  <Tool n="layers" />
                  <Bar />
                  {["bulb", "sun", "faint", "lock", "sq"].map((n) => <span key={n} className="flex w-[9px] justify-center"><Ico n={n} s="size-[9px]" /></span>)}
                  <Drop label="Layer" value="0" className="flex-1 pl-px" />
                </div>
                <Bar />
                <Drop label="Linetype" value="ByLayer" className="w-[87px] gap-[2px] pl-[3px]" font="font-['Liberation_Mono',monospace] text-[7px]"><span className="h-px w-[33px] bg-[#333]" /></Drop>
                <Bar />
                <Drop label="Lineweight" value="ByLayer" className="w-[69px] gap-[2px] pl-[2px]" font="font-['Liberation_Mono',monospace] text-[7px]"><span className="h-px w-[20px] bg-[#333]" /></Drop>
                <Bar />
                <Drop label="Plot style" value="ByColor" className="flex-1 bg-[#d6d4d8] pl-[2px] text-[#999] opacity-80" font="font-['Liberation_Mono',monospace] text-[7px]" />
              </div>
            </div>
            <div role="toolbar" className="flex h-[12px] w-[260px] items-center justify-between bg-[#f3f1f4]">
              <Row items={["list", "search2", "fog", "hash", "hex", "wave", "redhat", "redpg", "bluepg", "gate", "gateb", "folder", "briefcase", "check", "book", "win", "key", "flag", "level", "target", "ball"]} />
            </div>
          </div>

          <div className="flex min-h-0 flex-1 gap-[2px]">
            <Palette />
            <div className="flex min-w-0 flex-1 flex-col">
              <div className="flex min-h-0 flex-1">
                <div className="flex w-4 shrink-0 flex-col gap-[6px] pr-[3px] pt-1">
                  <Strip items={["line", "xline", "pline", "poly", "rect", "arc", "circ", "cloud", "spline", "ell", "ellarc", "insert", "mkblk", "dot", "hatch", "grad", "region", "table", "textA", "nodes"]} />
                  <Strip items={["lampA", "lampB", "lampC", "|", "house", "|", "globe", "burst"]} />
                </div>
                <div className="flex min-w-0 flex-1 flex-col">
                  <div className="flex min-h-0 flex-1">
                    <Canvas />
                    <div className="flex w-3 shrink-0 flex-col items-center justify-between bg-[#f3f1f4] py-1 text-[#555]">
                      <svg viewBox="0 0 8 8" className="size-[7px]" fill="none" stroke="currentColor" strokeWidth="1.300" aria-hidden="true"><path d="M1 5l3-3 3 3" /></svg>
                      <span className="-mt-[48px] h-[11px] w-[9px] bg-[#c8c6ca]" />
                      <svg viewBox="0 0 8 8" className="size-[7px]" fill="none" stroke="currentColor" strokeWidth="1.300" aria-hidden="true"><path d="M1 3l3 3 3-3" /></svg>
                    </div>
                  </div>
                  <div className="flex h-3 shrink-0 items-center bg-[#f3f1f4] text-[#222]">
                    {["M2 1v6M7 1v6L3 4z", "M6 1v6L2 4z", "M2 1v6l4-3z", "M7 1v6M2 1v6l4-3z"].map((d, i) => (
                      <button key={i} type="button" aria-label={["First", "Previous", "Next", "Last"][i]} className="flex h-full w-[10px] items-center justify-center border-r border-[#bbb]">
                        <svg viewBox="0 0 8 8" className="size-[5px]" fill="#222" stroke="#222" strokeWidth=".7" aria-hidden="true"><path d={d} /></svg>
                      </button>
                    ))}
                    <button type="button" className="h-full w-[31px] bg-black leading-[11px] text-white [clip-path:polygon(0_0,100%_0,84%_100%,16%_100%)]">模型</button>
                    <button type="button" className="ml-[3px] leading-[11px]">布局1</button>
                    <span className="mx-[4px] h-3 w-px rotate-[20deg] bg-[#333]" />
                    <button type="button" className="ml-px leading-[11px]">布局2</button>
                    <span className="mx-[4px] h-3 w-px rotate-[20deg] bg-[#333]" />
                    <div className="ml-auto flex h-full w-[314px] items-center text-[#444]">
                      <span className="h-[10px] w-[3px] bg-[#c8c6ca]" />
                      <svg viewBox="0 0 8 8" className="ml-1 size-[6px]" fill="none" stroke="currentColor" strokeWidth="1.500" aria-hidden="true"><path d="M5 1L2 4l3 3" /></svg>
                      <span className="ml-[11px] h-[9px] w-[11px] bg-[#c8c6ca]" />
                      <svg viewBox="0 0 8 8" className="ml-auto mr-4 size-[6px]" fill="none" stroke="currentColor" strokeWidth="1.500" aria-hidden="true"><path d="M3 1l3 3-3 3" /></svg>
                    </div>
                  </div>
                </div>
                <div className="flex w-4 shrink-0 flex-col gap-[6px] pl-[2px] pr-px pt-1">
                  <Strip items={["brush", "pair", "mirror", "offset", "array", "move", "rotate", "scale", "stretch", "trim", "extend", "brk", "brk2", "join", "chamfer", "fillet", "blend", "cube"]} />
                  <Strip items={["stack", "stack", "stack", "stack", "|", "brk", "stack"]} />
                </div>
              </div>
              <section aria-label="Command line" className="mt-[2px] flex h-[32px] shrink-0">
                <div className="flex w-4 shrink-0 flex-col items-center justify-end gap-[5px] bg-linear-to-b from-[#747377] to-[#4b4a4e] pb-px text-white">
                  <svg viewBox="0 0 8 8" className="size-[7px]" fill="none" stroke="#fff" strokeWidth="1.600" aria-hidden="true"><path d="M1 1l6 6M7 1L1 7" /></svg>
                  <Ico n="wrench" s="size-[9px]" c="#fff" />
                </div>
                <div className="flex min-w-0 flex-1 flex-col">
                  <p className="h-[17px] border-b border-[#98979a] bg-[#c9c7ca] pl-[2px] text-[10px] leading-[17px] text-[#222]">正在重生成模型。</p>
                  <label className="flex flex-1 items-center gap-1 bg-white pl-[3px]">
                    <svg viewBox="0 0 12 12" className="size-[10px]" fill="#d9dde2" stroke="#999" aria-hidden="true"><path d="M1.500 1.500h9v9h-9zM3 4l2 2-2 2M6 9h3" /></svg>
                    <Caret c="border-t-[#777]" />
                    <input aria-label="Command" placeholder="键入命令" className="h-3 min-w-0 flex-1 bg-transparent text-[11px] italic leading-3 outline-none placeholder:text-[#a3a3a5]" />
                  </label>
                </div>
              </section>
            </div>
          </div>
          <footer className="h-[13px] shrink-0 border-t border-[#4a4a4c] bg-linear-to-b from-[#99989b] to-[#79787b] pl-1 leading-[13px] text-[#222]">在块编辑器中打开块定义</footer>
        </div>
        <div className="w-[6px] shrink-0 bg-linear-to-b from-[#09090b] to-[#1f1f23] pl-[2px] pt-[139px]">
          <div className="h-8 bg-[#b5703a]" />
        </div>
      </div>
      <div className="-ml-[3px] h-[5px] shrink-0 bg-[#07080c]" />

      <div className="absolute -bottom-[24px] left-[126px] z-20 flex size-[33px] justify-center rounded-full border border-[#9adca9] bg-[#37a955] pt-px text-[10px] leading-[11px] text-white">62</div>

      <svg viewBox="0 0 1000 568" className="pointer-events-none absolute left-0 top-0 z-40 h-[568px] w-[1000px]" fill="#e5403f" aria-hidden="true">
        <path d="M141 158L231 37l-2-2 11-7-3 13-2-2L143 158z" />
        <path d="M535 175.500L318 190v3l-15-5 14-5v3z" />
      </svg>

      <div className="absolute bottom-[19px] right-[50px] z-20 flex h-[96px] w-[188px] items-start bg-[#1f2e57] pl-[6px] pt-[18px] text-[#d3d7dd]">
        <Deer />
        <div className="ml-[8px] whitespace-nowrap font-['Roboto','Noto_Sans_CJK_SC',sans-serif]">
          <p className="flex h-[34px] items-center leading-[34px]">
            <span className="text-[36px]">3D</span>
            <span className="text-[27px] font-bold">溜溜网</span>
          </p>
          <p className="font-['Inter',sans-serif] text-[24px] font-light leading-[25px]">3D66.COM</p>
        </div>
      </div>
    </div>
  );
}
